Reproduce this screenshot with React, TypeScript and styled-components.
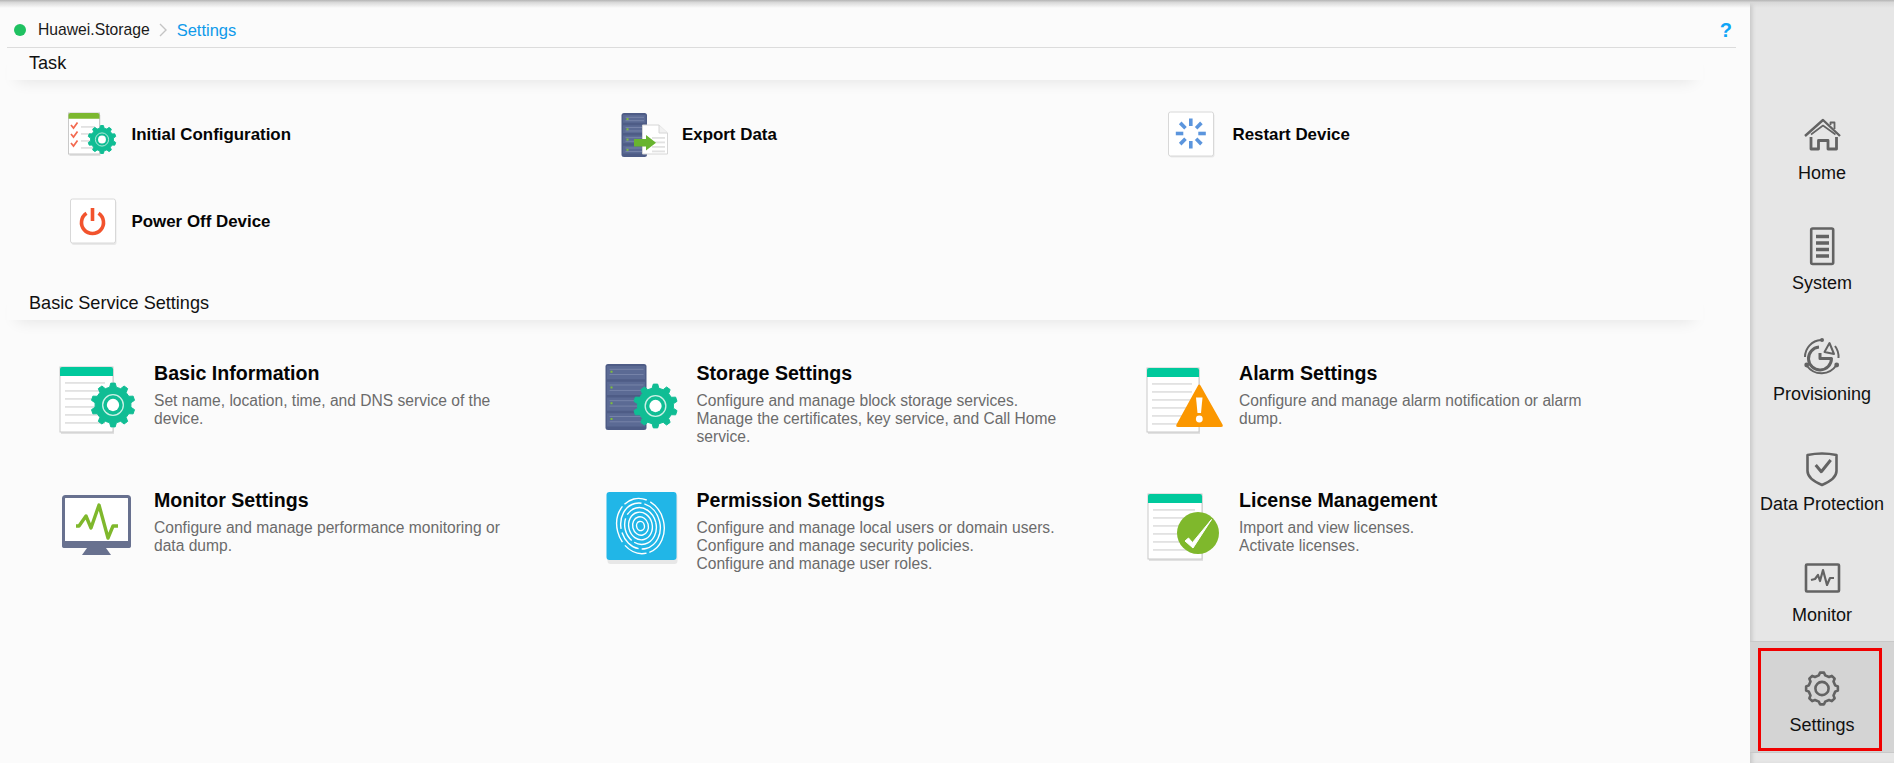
import React from "react";
import styled, { createGlobalStyle } from "styled-components";

const GlobalStyle = createGlobalStyle`
  html, body {
    margin: 0;
    padding: 0;
    height: 100%;
    background: #fbfbfb;
    font-family: "Liberation Sans", Arial, sans-serif;
    overflow: hidden;
  }
  #root {
    height: 100%;
  }
`;

const TEAL = "#10bd94";
const HEADER_TEAL = "#00c99c";
const SLATE = "#5b6a94";
const NAV_STROKE = "#636363";

// builds a cog outline so the same drawing can be reused at several sizes
const gearPath = (cx: number, cy: number, inner: number, outer: number, teeth: number) => {
  const step = (Math.PI * 2) / teeth;
  const pt = (r: number, a: number) =>
    `${(cx + r * Math.cos(a)).toFixed(2)} ${(cy + r * Math.sin(a)).toFixed(2)}`;
  let d = "";
  for (let i = 0; i < teeth; i++) {
    const a = i * step - Math.PI / 2;
    d += `${i === 0 ? "M" : "L"}${pt(inner, a - step * 0.3)} L${pt(outer, a - step * 0.16)} L${pt(outer, a + step * 0.16)} L${pt(inner, a + step * 0.3)} `;
  }
  return d + "Z";
};

const Page = styled.div`
  position: relative;
  display: flex;
  height: 763px;
  width: 1894px;
  overflow: hidden;
  background: #fbfbfb;
  &::before {
    content: "";
    position: absolute;
    left: 0;
    right: 0;
    top: 0;
    height: 8px;
    background: linear-gradient(#b4b4b4, #d8d8d8 30%, rgba(240, 240, 240, 0));
    z-index: 2;
  }
`;

const Main = styled.main`
  flex: 1;
  min-width: 0;
  padding: 0 14px 0 7px;
`;

const Crumbs = styled.div`
  display: flex;
  align-items: center;
  height: 48px;
  padding-top: 13px;
  box-sizing: border-box;
  border-bottom: 1px solid #dcdcdc;
  font-size: 15.7px;
  color: #1a1a1a;
  position: relative;
`;

const StatusDot = styled.span`
  width: 12px;
  height: 12px;
  border-radius: 50%;
  background: #1fc161;
  margin: 0 12px 0 7px;
`;

const CrumbCurrent = styled.span`
  color: #0f9aea;
  font-size: 16.5px;
`;

const CrumbSep = styled.svg`
  width: 12px;
  height: 14px;
  margin: 0 8px 0 7px;
`;

const Help = styled.span`
  margin-left: auto;
  margin-right: 4px;
  font-size: 20px;
  font-weight: 700;
  color: #0ea5f7;
`;

const SectionTitle = styled.div<{ $top: number }>`
  margin-top: ${(p) => p.$top}px;
  width: 1696px;
  height: 32px;
  padding-left: 22px;
  box-sizing: border-box;
  line-height: 31px;
  font-size: 18.1px;
  color: #111;
  box-shadow: 0 10px 16px -10px rgba(0, 0, 0, 0.12);
`;

const TaskGrid = styled.div`
  display: grid;
  grid-template-columns: repeat(3, 550.5px);
  grid-auto-rows: 87px;
  padding: 11px 0 0 59px;
`;

const TaskItem = styled.div`
  display: flex;
  align-items: center;
  gap: 13.5px;
`;

const TaskIcon = styled.svg`
  width: 52px;
  height: 48px;
  flex: none;
`;

const TaskLabel = styled.span`
  font-size: 16.9px;
  font-weight: 700;
  color: #050505;
`;

const CardGrid = styled.div`
  display: grid;
  grid-template-columns: repeat(3, 542.5px);
  grid-auto-rows: 127px;
  padding: 41px 0 0 51px;
`;

const Card = styled.div`
  display: flex;
  align-items: flex-start;
`;

const CardIcon = styled.svg`
  width: 96px;
  height: 80px;
  flex: none;
`;

const CardBody = styled.div`
  width: 380px;
`;

const CardTitle = styled.div`
  font-size: 19.6px;
  line-height: 24px;
  font-weight: 700;
  color: #050505;
  margin-bottom: 6.5px;
`;

const CardText = styled.div`
  font-size: 15.6px;
  line-height: 18px;
  color: #6b6b6b;
  white-space: pre-line;
`;

const Sidebar = styled.nav`
  position: relative;
  width: 144px;
  flex: none;
  box-sizing: border-box;
  padding-top: 90px;
  background: #e6e6e6;
  box-shadow: inset 4px 0 4px -2px #c6c6c6;
`;

const NavItem = styled.div<{ $active?: boolean }>`
  position: relative;
  height: 110.4px;
  display: flex;
  flex-direction: column;
  align-items: center;
  box-sizing: border-box;
  padding-top: 26px;
  font-size: 18px;
  color: #111;
  background: ${(p) => (p.$active ? "#d4d4d4" : "transparent")};
  box-shadow: ${(p) => (p.$active ? "0 -1px 0 #c9c9c9, 0 1px 0 #c9c9c9" : "none")};
  &::after {
    content: "";
    display: ${(p) => (p.$active ? "block" : "none")};
    position: absolute;
    left: 8px;
    right: 12px;
    top: 6px;
    bottom: 1px;
    border: 3px solid #f00000;
  }
`;

const NavIcon = styled.svg`
  width: 40px;
  height: 40px;
  fill: none;
  stroke: ${NAV_STROKE};
  stroke-width: 2.6;
  stroke-linejoin: round;
  margin-bottom: 7px;
`;

const Tile = styled.rect`
  fill: #fff;
  stroke: #d8d8d8;
`;

const DocLines = ({ x, y, w, rows, gap }: { x: number; y: number; w: number; rows: number; gap: number }) => (
  <>
    {Array.from({ length: rows }, (_, i) => (
      <rect key={i} x={x} y={y + i * gap} width={w} height={1.8} fill="#e2e2e2" />
    ))}
  </>
);

const Doc = ({ x, y, w, h, head = HEADER_TEAL }: { x: number; y: number; w: number; h: number; head?: string }) => (
  <>
    <rect x={x + 1} y={y + 2} width={w} height={h} fill="#000" opacity="0.1" />
    <rect x={x} y={y} width={w} height={h} fill="#fff" stroke="#c9c9c9" />
    <path
      d={`M${x} ${y + h * 0.14}V${y + 2}q0-2 2-2H${x + w - 2}q2 0 2 2V${y + h * 0.14}Z`}
      fill={head}
    />
  </>
);

const Cog = ({ cx, cy, r, color = TEAL }: { cx: number; cy: number; r: number; color?: string }) => (
  <>
    <path d={gearPath(cx, cy, r * 0.82, r, 10)} fill={color} stroke={color} strokeWidth="1" strokeLinejoin="round" />
    <circle cx={cx} cy={cy} r={r * 0.47} fill={color} stroke="#cdf1e6" strokeWidth={r * 0.06} />
    <circle cx={cx} cy={cy} r={r * 0.28} fill="#fff" />
  </>
);

const Rack = ({ x, y, w, h, rows, led = "#7fbf3a" }: { x: number; y: number; w: number; h: number; rows: number; led?: string }) => {
  const rowH = (h - 3) / rows;
  return (
    <>
      <rect x={x} y={y} width={w} height={h} rx="2.5" fill="#4e5c86" />
      {Array.from({ length: rows }, (_, i) => (
        <g key={i}>
          <rect x={x + 1.5} y={y + 2 + i * rowH} width={w - 3} height={rowH - 2.5} fill={SLATE} />
          <rect x={x + 4} y={y + 2 + i * rowH + rowH * 0.18} width={w - 7} height={0.8} fill="#7d8aae" />
          <rect x={x + 4} y={y + 2 + i * rowH + rowH * 0.52} width={w - 7} height={0.8} fill="#7d8aae" />
          <rect x={x + 5} y={y + 2 + i * rowH + rowH * 0.3} width={2} height={2} fill={led} />
        </g>
      ))}
    </>
  );
};

const InitialIcon = () => (
  <TaskIcon viewBox="0 0 52 48">
    <Doc x={2.5} y={2} w={31} h={41} head="#7cb82f" />
    <DocLines x={15} y={15} w={14} rows={4} gap={7} />
    <path d="M5 14l2.5 3 4-5.5M5 23l2.5 3 4-5.5M5 32l2.5 3 4-5.5" fill="none" stroke="#f36a50" strokeWidth="1.7" />
    <Cog cx={36} cy={28.5} r={14} />
  </TaskIcon>
);

const ExportIcon = () => (
  <TaskIcon viewBox="0 0 52 48">
    <Rack x={4.5} y={2} w={25.5} h={44} rows={4} />
    <path d="M25.5 14H42L50.5 22V43H25.5Z" fill="#fff" stroke="#d6d6d6" />
    <path d="M42 14V22H50.5" fill="#f1f1f1" stroke="#d6d6d6" />
    <DocLines x={35} y={26} w={13} rows={4} gap={4.5} />
    <path d="M17 28H29V24L39 31.7L29 39.5V35.5H17Z" fill="#68b42f" />
  </TaskIcon>
);

const RestartIcon = () => (
  <TaskIcon viewBox="0 0 52 48">
    <rect x={2.5} y={2.5} width={45} height={44} rx="2" fill="#000" opacity="0.07" />
    <Tile x={1.5} y={1} width={45} height={44} rx="2" />
    {[0, 45, 90, 135, 180, 225, 270, 315].map((a) => (
      <rect key={a} x={22} y={7.5} width={3.6} height={7.5} fill="#5b95dd" transform={`rotate(${a} 23.8 22.5)`} />
    ))}
  </TaskIcon>
);

const PowerIcon = () => (
  <TaskIcon viewBox="0 0 52 48">
    <rect x={5.5} y={2.5} width={45} height={44.5} rx="2" fill="#000" opacity="0.07" />
    <Tile x={4.5} y={1} width={45} height={44} rx="2" />
    <path d="M20.5 15.3a11 11 0 1 0 12 0" fill="none" stroke="#f2532d" strokeWidth="3.6" />
    <rect x={24.7} y={10} width={3.6} height={13} fill="#f2532d" />
  </TaskIcon>
);

const BasicIcon = () => (
  <CardIcon viewBox="0 0 96 80">
    <Doc x={2} y={6} w={53} h={65} />
    <DocLines x={7} y={21} w={40} rows={6} gap={8} />
    <Cog cx={55} cy={44} r={22} />
  </CardIcon>
);

const StorageIcon = () => (
  <CardIcon viewBox="0 0 96 80">
    <Rack x={4.5} y={3} w={41} h={66} rows={4} />
    <Cog cx={54.5} cy={45} r={22} />
  </CardIcon>
);

const AlarmIcon = () => (
  <CardIcon viewBox="0 0 96 80">
    <Doc x={4} y={7} w={52} h={64} />
    <DocLines x={9} y={22} w={40} rows={6} gap={8} />
    <path d="M55 24.5L33.5 63.5Q32.5 66 35 66H78Q80.5 66 79.5 63.5L57.5 24.5Q56 22.5 55 24.5Z" fill="#fb9700" />
    <path d="M53 36.5h6.5l-1.5 15.5h-3.5Z" fill="#fff" />
    <circle cx={56.3} cy={58} r={3.4} fill="#fff" />
  </CardIcon>
);

const MonitorIcon = () => (
  <CardIcon viewBox="0 0 96 80">
    <rect x={5.5} y={8.5} width={66} height={50} rx="2" fill="#fff" stroke="#68718f" strokeWidth="3" />
    <rect x={4} y={53} width={69} height={7} rx="2" fill="#68718f" />
    <path d="M29 60H48L53 67H24Z" fill="#68718f" />
    <path d="M18 38h3L28 28L33 40L41 17L50 50L55 38H60" fill="none" stroke="#7fb82c" strokeWidth="3.4" strokeLinejoin="round" />
  </CardIcon>
);

const PRINT_RINGS = [4, 8, 12, 16, 20, 24];

const PermissionIcon = () => (
  <CardIcon viewBox="0 0 96 80">
    <rect x={6.5} y={6} width={70} height={70} rx="3" fill="#000" opacity="0.08" />
    <rect x={5.5} y={4} width={70} height={68} rx="3" fill="#21b6e7" />
    <g fill="none" stroke="#fff" strokeWidth="1.4" transform="rotate(-14 39.5 38)">
      {PRINT_RINGS.map((r, i) => (
        <ellipse
          key={r}
          cx={39.5}
          cy={38}
          rx={r * 0.98}
          ry={r * 1.16}
          strokeDasharray={i > 2 ? "38 3 24 4" : undefined}
        />
      ))}
    </g>
  </CardIcon>
);

const LicenseIcon = () => (
  <CardIcon viewBox="0 0 96 80">
    <Doc x={5} y={6} w={54} h={65} />
    <DocLines x={10} y={21} w={42} rows={6} gap={8} />
    <circle cx={55} cy={45} r={21} fill="#7fb82c" />
    <path d="M42 53l3.5-3 4 4.5 19-23-18.5 28.5Z" fill="#fff" stroke="#fff" strokeWidth="1" strokeLinejoin="round" />
  </CardIcon>
);

const HomeGlyph = () => (
  <NavIcon viewBox="0 0 40 40">
    <path d="M3 20L21 4L38 20" strokeWidth="2.4" />
    <path d="M9 18.5L21 9.5L33.5 18.5" strokeWidth="1.6" />
    <path d="M9 21V33H16.5V24.5H26V33H34.5V21" strokeWidth="2.8" />
    <path d="M28.5 9V6.5H32.5V13" strokeWidth="1.8" />
  </NavIcon>
);

const SystemGlyph = () => (
  <NavIcon viewBox="0 0 40 40">
    <rect x={9.2} y={2.5} width={22} height={35.5} rx="1.5" />
    <path d="M14 10.5H27M14 17H27M14 23.5H27M14 30H27" strokeWidth="3.6" />
  </NavIcon>
);

const ProvisioningGlyph = () => (
  <NavIcon viewBox="0 0 40 40">
    <path d="M3 20A17 17 0 0 1 19 3" strokeWidth="2" />
    <path d="M5 29A18 18 0 0 0 34.5 28" strokeWidth="2" />
    <path d="M33 9A18 18 0 0 1 36.5 21" strokeWidth="2" />
    <circle cx={20} cy={3} r={2} fill={NAV_STROKE} stroke="none" />
    <circle cx={4.7} cy={28} r={2.4} fill={NAV_STROKE} stroke="none" />
    <circle cx={34.7} cy={28} r={2.4} fill={NAV_STROKE} stroke="none" />
    <path d="M17 10A11.5 11.5 0 1 0 29.5 21.5H18V16" strokeWidth="3" />
    <path d="M22.5 15L27.5 6L32 17Z" strokeWidth="2" />
  </NavIcon>
);

const ShieldGlyph = () => (
  <NavIcon viewBox="0 0 40 40">
    <path d="M5.5 8Q20 5 34.5 8V24Q34.5 32 20 38Q5.5 32 5.5 24Z" />
    <path d="M13.7 18L19.3 24.7L28.7 13" strokeWidth="3" />
  </NavIcon>
);

const MonitorGlyph = () => (
  <NavIcon viewBox="0 0 40 40">
    <rect x={4} y={6.5} width={33} height={27} rx="1" />
    <path d="M9 22L13 21L16 17L18 23L21 12L25 27L28 20L32 20" strokeWidth="2.2" />
  </NavIcon>
);

const SettingsGlyph = () => (
  <NavIcon viewBox="0 0 40 40">
    <path d={gearPath(20, 20.5, 13.5, 16, 8)} />
    <circle cx={20} cy={20.5} r={6.6} />
  </NavIcon>
);

const TASKS = [
  { label: "Initial Configuration", Icon: InitialIcon },
  { label: "Export Data", Icon: ExportIcon },
  { label: "Restart Device", Icon: RestartIcon },
  { label: "Power Off Device", Icon: PowerIcon },
];

const CARDS = [
  { title: "Basic Information", text: "Set name, location, time, and DNS service of the\ndevice.", Icon: BasicIcon },
  {
    title: "Storage Settings",
    text: "Configure and manage block storage services.\nManage the certificates, key service, and Call Home\nservice.",
    Icon: StorageIcon,
  },
  { title: "Alarm Settings", text: "Configure and manage alarm notification or alarm\ndump.", Icon: AlarmIcon },
  { title: "Monitor Settings", text: "Configure and manage performance monitoring or\ndata dump.", Icon: MonitorIcon },
  {
    title: "Permission Settings",
    text: "Configure and manage local users or domain users.\nConfigure and manage security policies.\nConfigure and manage user roles.",
    Icon: PermissionIcon,
  },
  { title: "License Management", text: "Import and view licenses.\nActivate licenses.", Icon: LicenseIcon },
];

const NAV = [
  { label: "Home", Icon: HomeGlyph },
  { label: "System", Icon: SystemGlyph },
  { label: "Provisioning", Icon: ProvisioningGlyph },
  { label: "Data Protection", Icon: ShieldGlyph },
  { label: "Monitor", Icon: MonitorGlyph },
  { label: "Settings", Icon: SettingsGlyph, active: true },
];

export default function App() {
  return (
    <Page>
      <GlobalStyle />
      <Main>
        <Crumbs>
          <StatusDot />
          <span>Huawei.Storage</span>
          <CrumbSep viewBox="0 0 12 14">
            <path d="M3 1l6 6-6 6" fill="none" stroke="#c4c4c4" strokeWidth="1.4" />
          </CrumbSep>
          <CrumbCurrent>Settings</CrumbCurrent>
          <Help>?</Help>
        </Crumbs>
        <SectionTitle $top={0}>Task</SectionTitle>
        <TaskGrid>
          {TASKS.map(({ label, Icon }) => (
            <TaskItem key={label}>
              <Icon />
              <TaskLabel>{label}</TaskLabel>
            </TaskItem>
          ))}
        </TaskGrid>
        <SectionTitle $top={23}>Basic Service Settings</SectionTitle>
        <CardGrid>
          {CARDS.map(({ title, text, Icon }) => (
            <Card key={title}>
              <Icon />
              <CardBody>
                <CardTitle>{title}</CardTitle>
                <CardText>{text}</CardText>
              </CardBody>
            </Card>
          ))}
        </CardGrid>
      </Main>
      <Sidebar>
        {NAV.map(({ label, Icon, active }) => (
          <NavItem key={label} $active={active}>
            <Icon />
            {label}
          </NavItem>
        ))}
      </Sidebar>
    </Page>
  );
}
